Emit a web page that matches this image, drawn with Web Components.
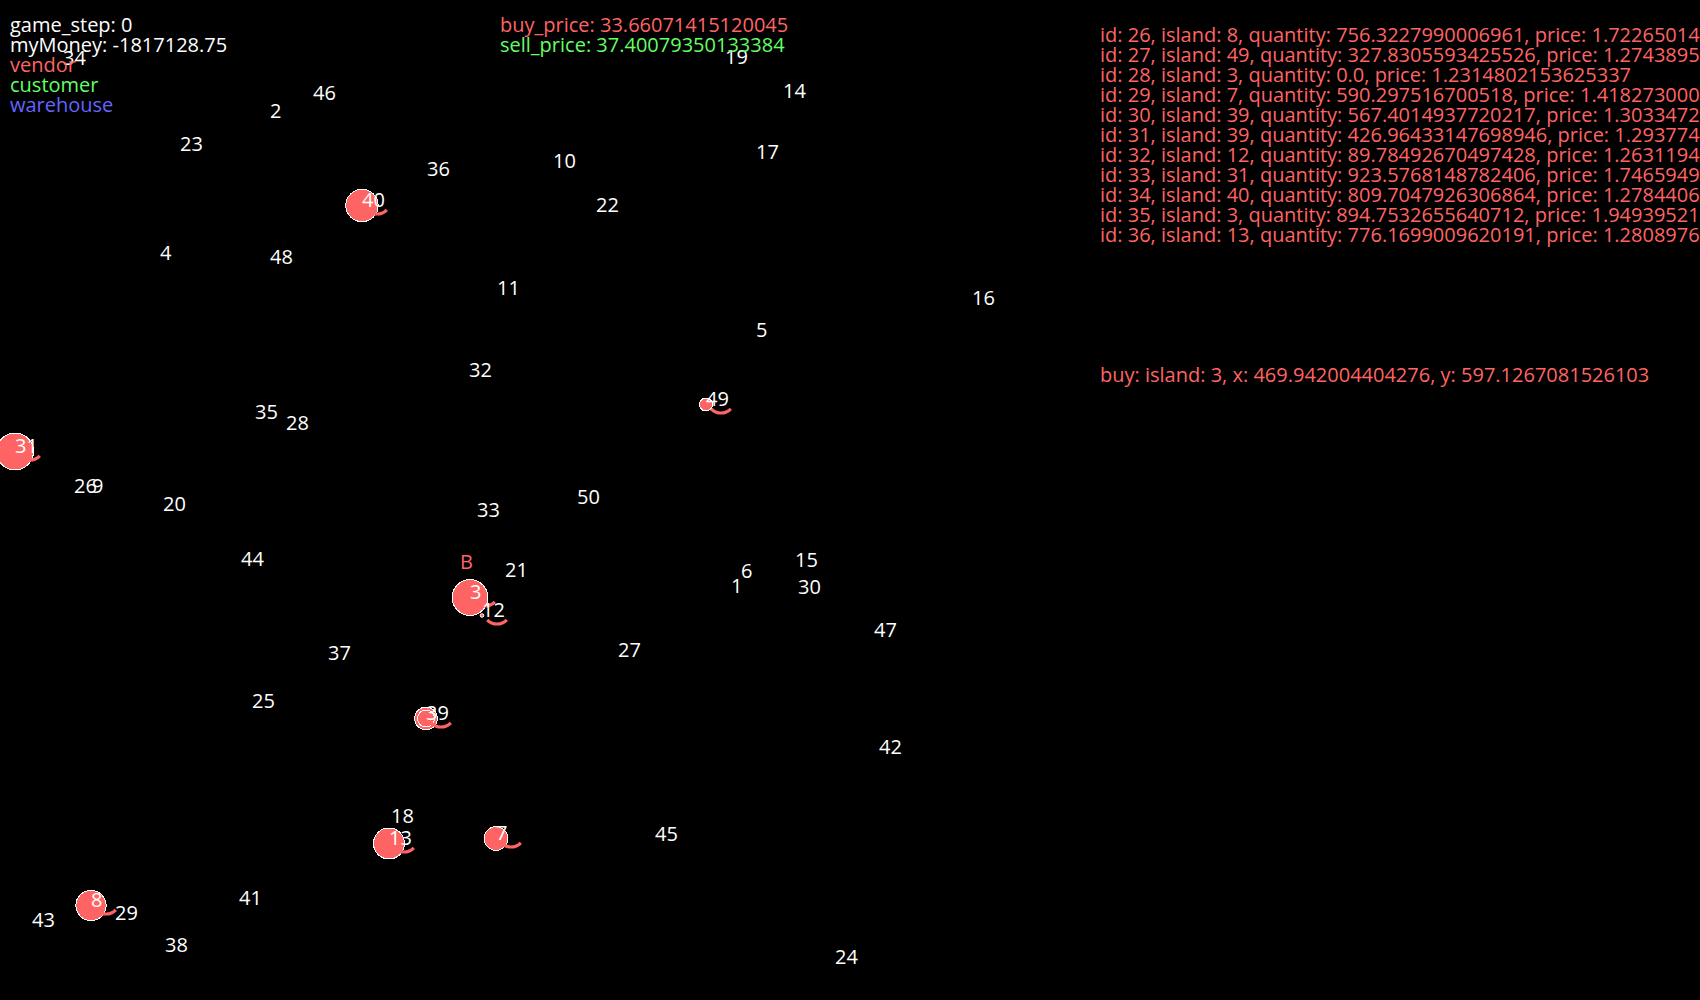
<!DOCTYPE html>
<html lang="en">
<head>
<meta charset="utf-8">
<title>Island trading</title>
<style>
  body { margin: 0; background: #000; color: #fff; font: 20px/20px "Open Sans", "Noto Sans", sans-serif; overflow: hidden; }
</style>
</head>
<body>
<trade-game></trade-game>
<script>
const ISLANDS = [
  [34,63,63],[46,313,98],[2,270,116],[23,180,149],[4,160,258],[48,270,262],[36,427,174],[10,553,166],
  [22,596,210],[11,497,293],[19,725,62],[14,783,96],[17,756,157],[16,972,303],[5,756,335],[26,74,491],
  [9,92,491],[21,505,575],[18,391,821],[29,115,918],[32,469,375],[35,255,417],[28,286,428],[20,163,509],
  [33,477,515],[50,577,502],[44,241,564],[6,741,576],[1,731,591],[15,795,565],[30,798,592],[47,874,635],
  [27,618,655],[37,328,658],[25,252,706],[42,879,752],[45,655,839],[41,239,903],[43,32,925],[38,165,950],
  [24,835,962],
  [40,362,205,[809.7]],[3,470,597,[894.75]],[12,482,615,[89.78]],[39,426,718,[567.4,426.96]],
  [13,389,843,[776.17]],[7,496,838,[590.3]],[8,91,905,[756.3]],[49,706,404,[327.8]],[31,15,451,[923.6]]
];
const OFFERS = [
  [26,8,"756.3227990006961","1.72265014"],[27,49,"327.8305593425526","1.2743895"],
  [28,3,"0.0","1.2314802153625337"],[29,7,"590.297516700518","1.418273000"],
  [30,39,"567.4014937720217","1.3033472"],[31,39,"426.96433147698946","1.293774"],
  [32,12,"89.78492670497428","1.2631194"],[33,31,"923.5768148782406","1.7465949"],
  [34,40,"809.7047926306864","1.2784406"],[35,3,"894.7532655640712","1.94939521"],
  [36,13,"776.1699009620191","1.2808976"]
];

// A line of status text; the kind attribute picks its colour.
class StatusLine extends HTMLElement {
  connectedCallback() {
    this.attachShadow({ mode: "open" }).innerHTML = `
      <style>
        :host { display: block; white-space: nowrap; }
        :host([kind=vendor]) { color: #ff6464; }
        :host([kind=customer]) { color: #64ff64; }
        :host([kind=warehouse]) { color: #6464ff; }
      </style><slot></slot>`;
  }
}

// One island: a disc per offer (radius = quantity / 50), an arc and the number.
class MapIsland extends HTMLElement {
  connectedCallback() {
    const stock = (this.getAttribute("stock") || "").split(",").filter(Boolean);
    const discs = stock.map(q =>
      `<circle cy=".5" r="${q / 50}" fill="#ff6464" stroke="#fff" shape-rendering="${q < 100 ? "auto" : "crispEdges"}"/>`).join("");
    const arc = stock.length
      ? `<path d="M24.8 4.8A13.5 13.5 0 0 1 5.2 4.8" fill="none" stroke="#ff6464" stroke-width="3.2"/>` : "";
    this.attachShadow({ mode: "open" }).innerHTML = `
      <style>
        :host { position: absolute; display: block; width: 0; height: 0; }
        svg { position: absolute; left: 0; top: 0; width: 1px; height: 1px; overflow: visible; }
        span { position: absolute; left: 0; bottom: -5px; white-space: nowrap; }
      </style>
      ${stock.length ? `<svg aria-hidden="true">${discs}${arc}</svg>` : ""}<span><slot></slot></span>`;
  }
}

class IslandMap extends HTMLElement {
  connectedCallback() {
    this.attachShadow({ mode: "open" }).innerHTML = `
      <style>
        :host { position: absolute; inset: 0; display: block; overflow: hidden; }
        .target { color: #ff6464; }
      </style>
      ${ISLANDS.map(([id, x, y, stock = []]) =>
        `<map-island style="left:${x}px;top:${y}px" stock="${stock}">${id}</map-island>`).join("")}
      <map-island class="target" style="left:460px;top:567px">B</map-island>`;
  }
}

class TradeGame extends HTMLElement {
  connectedCallback() {
    this.attachShadow({ mode: "open" }).innerHTML = `
      <style>
        :host { position: relative; display: block; min-height: 100vh; overflow: hidden; }
        main { position: relative; display: grid; padding: 15px 0 0 10px;
               grid-template-columns: minmax(0, 49fr) minmax(0, 60fr) minmax(0, 60fr); }
        .offers { display: flex; flex-direction: column; gap: 120px; padding-top: 10px; }
      </style>
      <island-map></island-map>
      <main>
        <section>
          <status-line>game_step: 0</status-line>
          <status-line>myMoney: -1817128.75</status-line>
          <status-line kind="vendor">vendor</status-line>
          <status-line kind="customer">customer</status-line>
          <status-line kind="warehouse">warehouse</status-line>
        </section>
        <section>
          <status-line kind="vendor">buy_price: 33.66071415120045</status-line>
          <status-line kind="customer">sell_price: 37.40079350133384</status-line>
        </section>
        <section class="offers">
          <div>${OFFERS.map(([id, island, quantity, price]) =>
            `<status-line kind="vendor">id: ${id}, island: ${island}, quantity: ${quantity}, price: ${price}</status-line>`).join("")}</div>
          <status-line kind="vendor">buy: island: 3, x: 469.942004404276, y: 597.1267081526103</status-line>
        </section>
      </main>`;
  }
}

customElements.define("status-line", StatusLine);
customElements.define("map-island", MapIsland);
customElements.define("island-map", IslandMap);
customElements.define("trade-game", TradeGame);
</script>
</body>
</html>
